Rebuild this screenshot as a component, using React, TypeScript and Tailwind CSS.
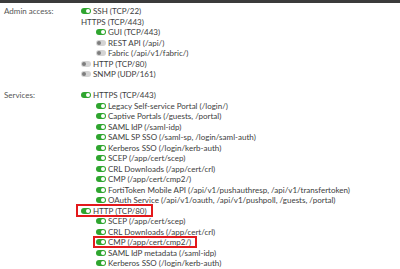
import React from "react";

type Item = {
  label: string;
  on?: boolean;
  noToggle?: boolean;
  level?: number;
  box?: "wide" | "tight";
};

const admin: Item[] = [
  { label: "SSH (TCP/22)", on: true },
  { label: "HTTPS (TCP/443)", noToggle: true },
  { label: "GUI (TCP/443)", on: true, level: 1 },
  { label: "REST API (/api/)", level: 1 },
  { label: "Fabric (/api/v1/fabric/)", level: 1 },
  { label: "HTTP (TCP/80)" },
  { label: "SNMP (UDP/161)" },
];

const services: Item[] = [
  { label: "HTTPS (TCP/443)", on: true },
  { label: "Legacy Self-service Portal (/login/)", on: true, level: 1 },
  { label: "Captive Portals (/guests, /portal)", on: true, level: 1 },
  { label: "SAML IdP (/saml-idp)", on: true, level: 1 },
  { label: "SAML SP SSO (/saml-sp, /login/saml-auth)", on: true, level: 1 },
  { label: "Kerberos SSO (/login/kerb-auth)", on: true, level: 1 },
  { label: "SCEP (/app/cert/scep)", on: true, level: 1 },
  { label: "CRL Downloads (/app/cert/crl)", on: true, level: 1 },
  { label: "CMP (/app/cert/cmp2/)", on: true, level: 1 },
  { label: "FortiToken Mobile API (/api/v1/pushauthresp, /api/v1/transfertoken)", on: true, level: 1 },
  { label: "OAuth Service (/api/v1/oauth, /api/v1/pushpoll, /guests, /portal)", on: true, level: 1 },
  { label: "HTTP (TCP/80)", on: true, box: "wide" },
  { label: "SCEP (/app/cert/scep)", on: true, level: 1 },
  { label: "CRL Downloads (/app/cert/crl)", on: true, level: 1 },
  { label: "CMP (/app/cert/cmp2/)", on: true, level: 1, box: "tight" },
  { label: "SAML IdP metadata (/saml-idp)", on: true, level: 1 },
  { label: "Kerberos SSO (/login/kerb-auth)", on: true, level: 1 },
];

function Toggle({ on }: { on?: boolean }) {
  return on ? (
    <span className="flex h-[6px] w-[10px] shrink-0 items-center justify-end rounded-full bg-[#2fa52f] pr-[1px]">
      <span className="h-[4px] w-[4px] rounded-full bg-white" />
    </span>
  ) : (
    <span className="flex h-[6px] w-[10px] shrink-0 items-center rounded-full bg-[#d4d4d4] pl-[1px]">
      <span className="h-[4px] w-[4px] rounded-full bg-[#7d7d7d]" />
    </span>
  );
}

function Row({ item }: { item: Item }) {
  const boxCls =
    item.box === "wide"
      ? "-ml-[4px] pl-[4px] pr-[5px] outline-2 outline-offset-[-1px] outline-[#e3191c]"
      : item.box === "tight"
        ? "-ml-[2px] pl-[2px] pr-[5px] outline-2 outline-offset-[-1px] outline-[#e3191c]"
        : "";
  return (
    <div className={`flex h-[10.5px] items-center ${item.level ? "pl-[15px]" : ""}`}>
      <span className={`flex h-full items-center gap-[2px] whitespace-nowrap ${boxCls}`}>
        {!item.noToggle && <Toggle on={item.on} />}
        <span>{item.label}</span>
      </span>
    </div>
  );
}

function Section({ title, items }: { title: string; items: Item[] }) {
  return (
    <div className="flex">
      <div className="flex h-[10.5px] w-[81px] shrink-0 items-center pl-[4px] text-[#555]">{title}</div>
      <div className="flex flex-col">
        {items.map((it, i) => (
          <Row key={i} item={it} />
        ))}
      </div>
    </div>
  );
}

export default function App() {
  return (
    <div
      className="h-[269px] w-[400px] overflow-hidden bg-white text-[8px] leading-none text-[#3d3d3d]"
      style={{ fontFamily: "Lato, 'Noto Sans', sans-serif" }}
    >
      <div className="h-[3px] bg-[#3b3b3b]" />
      <div className="flex flex-col gap-[10.5px] pt-[2.75px]">
        <Section title="Admin access:" items={admin} />
        <Section title="Services:" items={services} />
      </div>
    </div>
  );
}
